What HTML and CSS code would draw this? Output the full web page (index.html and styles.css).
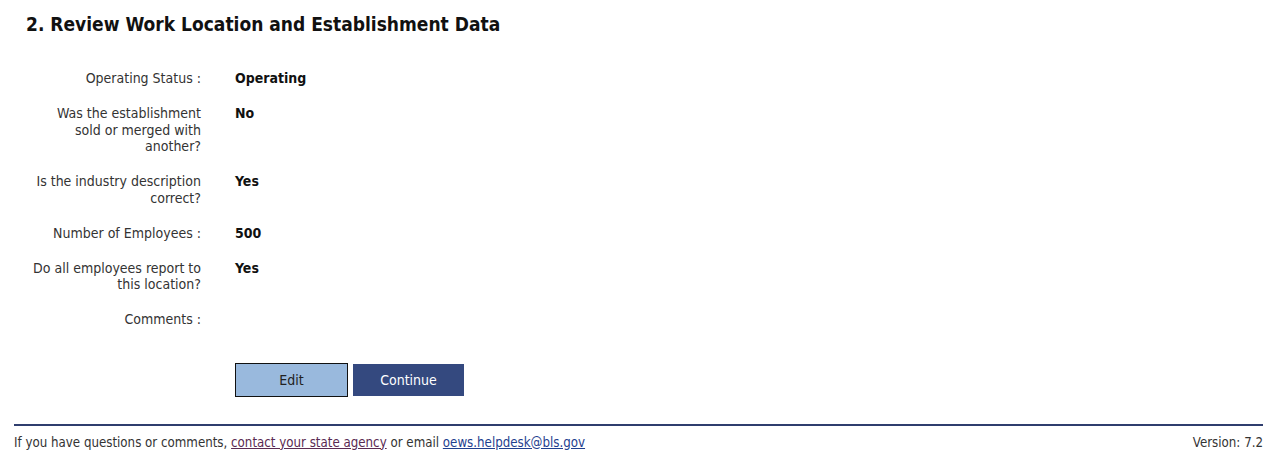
FILE: index.html
```html
<!DOCTYPE html>
<html lang="en">
  <head>
    <meta charset="UTF-8" />
    <meta name="viewport" content="width=device-width, initial-scale=1.0" />
    <title>Review Work Location</title>
    <link rel="stylesheet" href="styles.css">
  </head>
  <body>
    <div class="page">
      <h2 class="title">2. Review Work Location and Establishment Data</h2>
      <div class="review">
        <div class="row">
          <div class="label">Operating Status :</div>
          <div class="value">Operating</div>
        </div>
        <div class="row">
          <div class="label">Was the establishment sold or merged with another?</div>
          <div class="value">No</div>
        </div>
        <div class="row">
          <div class="label">Is the industry description correct?</div>
          <div class="value">Yes</div>
        </div>
        <div class="row">
          <div class="label">Number of Employees :</div>
          <div class="value">500</div>
        </div>
        <div class="row">
          <div class="label">Do all employees report to this location?</div>
          <div class="value">Yes</div>
        </div>
        <div class="row">
          <div class="label">Comments :</div>
          <div class="value"></div>
        </div>
      </div>
      <div class="buttons">
        <button class="btn-edit">Edit</button>
        <button class="btn-continue">Continue</button>
      </div>
    </div>
    <div class="footer">
      <div>If you have questions or comments, <a href="#" class="visited">contact your state agency</a> or email <a href="#">oews.helpdesk@bls.gov</a></div>
      <div>Version: 7.2</div>
    </div>
  </body>
</html>
```

FILE: styles.css
```css
body {
  margin: 0;
  font-family: "DejaVu Sans Condensed", "DejaVu Sans", sans-serif;
  font-size: 14px;
  color: #222;
  background-color: white;
}
.page {
  padding: 0 26px;
}
.title {
  font-size: 19px;
  font-weight: bold;
  margin: 0;
  padding-top: 13px;
  line-height: 22px;
  color: #111;
}
.review {
  margin-top: 35px;
  padding-left: 5px;
  display: flex;
  flex-direction: column;
  gap: 18.5px;
}
.row {
  display: flex;
  line-height: 16.5px;
}
.label {
  width: 170px;
  text-align: right;
  color: #333;
}
.value {
  margin-left: 34px;
  font-weight: bold;
  color: #111;
}
.buttons {
  margin-top: 35px;
  margin-left: 209px;
  display: flex;
  align-items: center;
  gap: 5px;
}
.buttons button {
  font-family: "DejaVu Sans Condensed", "DejaVu Sans", sans-serif;
  font-size: 14px;
  cursor: pointer;
}
.btn-edit {
  width: 113px;
  height: 34px;
  background-color: #99b9dd;
  border: 1px solid #111;
  color: #222;
}
.btn-continue {
  width: 111px;
  height: 32px;
  background-color: #34497f;
  border: none;
  color: white;
}
.footer {
  margin: 27px 15px 0 14px;
  border-top: 2px solid #2f3e6e;
  display: flex;
  justify-content: space-between;
  padding-top: 9px;
  font-size: 13.2px;
  color: #333;
  line-height: 16px;
}
.footer a {
  color: #1f3f8f;
}
.footer a.visited {
  color: #5a2a52;
}
```
